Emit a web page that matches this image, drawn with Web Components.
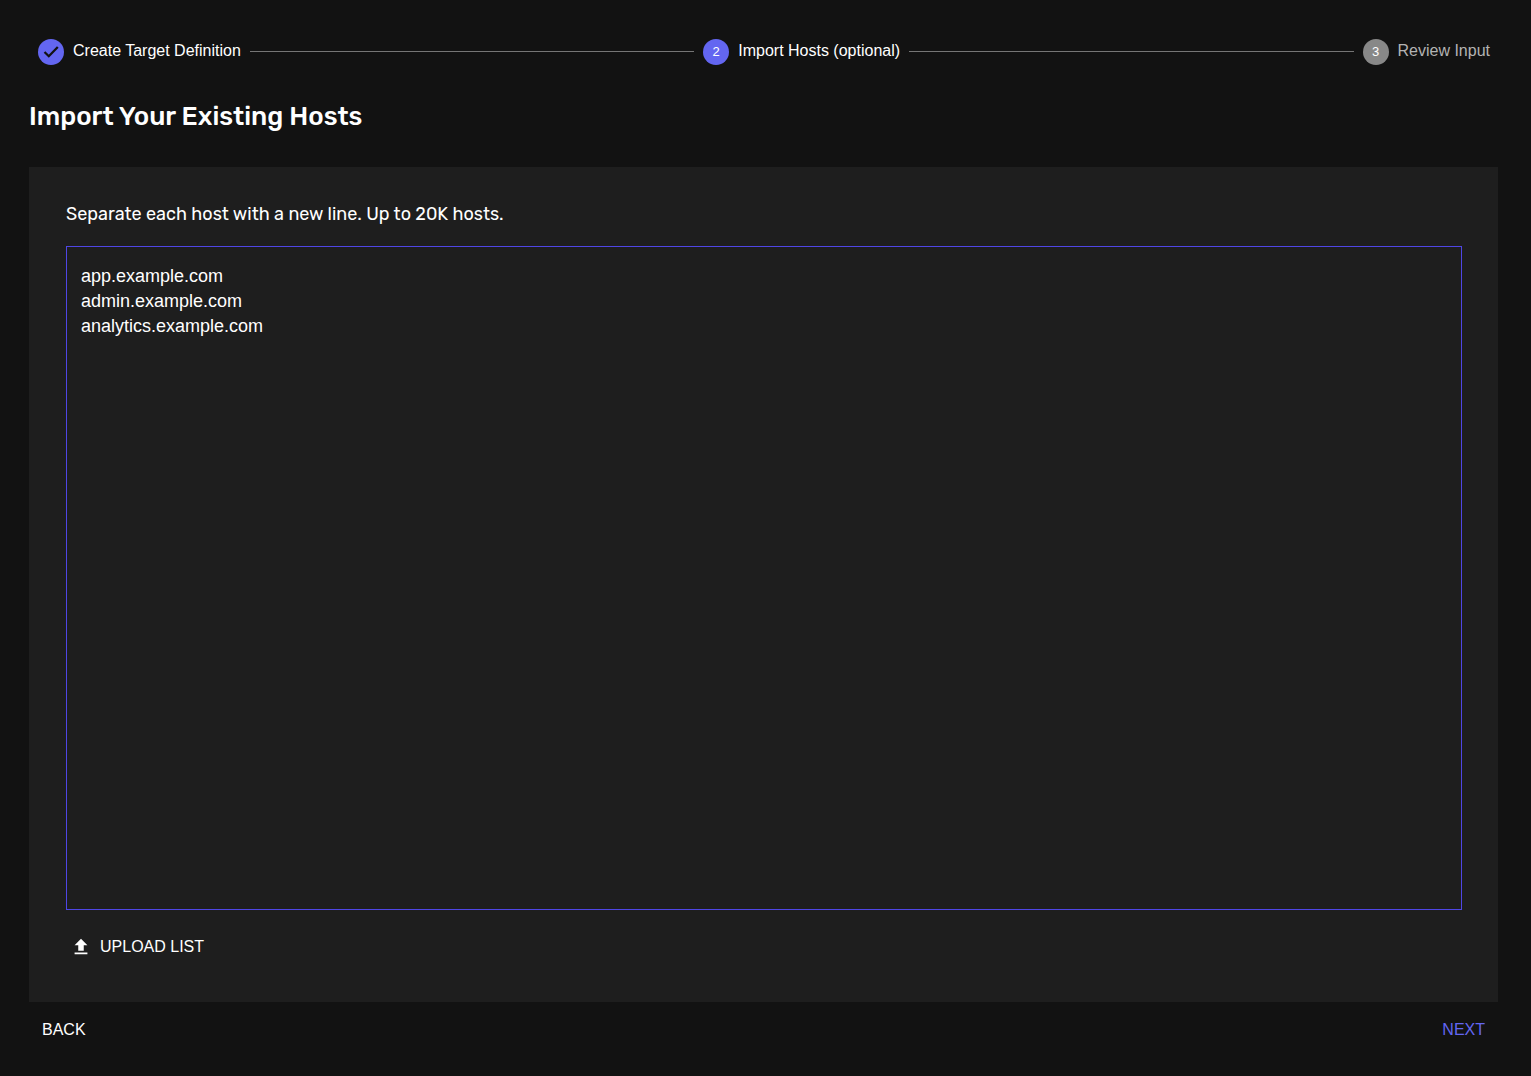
<!DOCTYPE html>
<html lang="en">
<head>
<meta charset="utf-8">
<title>Import Your Existing Hosts</title>
<style>
  html { background: #121212; }
  body {
    margin: 0;
    color: #fff;
    font-family: "Liberation Sans", Arial, sans-serif;
    --accent: #6366f1;
    --accent-strong: #4f46e5;
    --surface: #1e1e1e;
    --display: Rubik, Roboto, sans-serif;
  }
</style>
</head>
<body>
<host-import-page></host-import-page>

<template id="page-template">
  <style>
    :host {
      display: flex;
      flex-direction: column;
      box-sizing: border-box;
      min-height: 100vh;
      padding: 39px 33px 27px 29px;
    }
    h1 {
      margin: 32px 0 30px;
      font: 500 26px/40px var(--display);
    }
    host-panel { flex: 1; }
    footer {
      display: flex;
      justify-content: space-between;
      padding: 7px 6px 0;
    }
  </style>
  <step-list>
    <step-item number="1" state="done">Create Target Definition</step-item>
    <step-item number="2" state="active">Import Hosts (optional)</step-item>
    <step-item number="3" state="pending">Review Input</step-item>
  </step-list>
  <h1>Import Your Existing Hosts</h1>
  <host-panel></host-panel>
  <footer>
    <text-button>BACK</text-button>
    <text-button variant="primary">NEXT</text-button>
  </footer>
</template>

<template id="steps-template">
  <style>
    :host { display: flex; align-items: center; padding: 0 8px 0 9px; gap: 9px; }
  </style>
  <slot></slot>
</template>

<template id="step-template">
  <style>
    :host { display: contents; }
    .line {
      flex: 1;
      height: 1px;
      margin-bottom: 2px;
      background: #757575;
    }
    :host(:first-child) .line { display: none; }
    .badge {
      display: grid;
      place-items: center;
      width: 26px;
      height: 26px;
      border-radius: 50%;
      background: var(--accent);
      font-size: 13px;
      line-height: 26px;
    }
    :host([state="pending"]) .badge { background: #888; }
    .label { font-size: 16px; line-height: 24px; white-space: nowrap; padding-bottom: 2px; }
    :host([state="pending"]) .label { color: #b3b3b3; }
    svg { display: block; }
  </style>
  <span class="line"></span>
  <span class="badge"></span>
  <span class="label"><slot></slot></span>
</template>

<template id="panel-template">
  <style>
    :host {
      display: flex;
      flex-direction: column;
      align-items: flex-start;
      background: var(--surface);
      padding: 35px 36px 36px 37px;
    }
    label { font: 400 18px/24px var(--display); }
    textarea {
      flex: 1;
      align-self: stretch;
      box-sizing: border-box;
      min-height: 200px;
      margin: 20px 0 16px;
      padding: 17px 14px;
      border: 1px solid var(--accent-strong);
      border-radius: 0;
      outline: none;
      resize: none;
      background: transparent;
      color: #fff;
      font: 18px/25px "Liberation Sans", Arial, sans-serif;
    }
  </style>
  <label for="hosts">Separate each host with a new line. Up to 20K hosts.</label>
  <textarea id="hosts" spellcheck="false">app.example.com
admin.example.com
analytics.example.com</textarea>
  <text-button variant="icon">
    <svg slot="icon" width="22" height="22" viewBox="0 0 24 24" fill="#fff" aria-hidden="true"><path d="M9 16h6v-6h4l-7-7-7 7h4zm-4 2h14v2H5z"/></svg>UPLOAD LIST</text-button>
</template>

<template id="button-template">
  <style>
    :host { display: block; }
    button {
      display: flex;
      align-items: center;
      gap: 8px;
      margin: 0;
      padding: 9px 7px 7px;
      border: 0;
      background: none;
      color: #fff;
      font: 16px/24px "Liberation Sans", Arial, sans-serif;
      cursor: pointer;
    }
    :host([variant="icon"]) button { padding-inline: 4px; }
    :host([variant="primary"]) button { color: var(--accent); }
    ::slotted(svg) { display: block; }
  </style>
  <button type="button"><slot name="icon"></slot><span><slot></slot></span></button>
</template>

<script>
  class TemplateElement extends HTMLElement {
    constructor() {
      super();
      const template = document.getElementById(this.constructor.template);
      this.attachShadow({ mode: "open" }).append(template.content.cloneNode(true));
    }
  }

  class TextButton extends TemplateElement {
    static template = "button-template";
  }

  class StepItem extends TemplateElement {
    static template = "step-template";
    connectedCallback() {
      const badge = this.shadowRoot.querySelector(".badge");
      if (this.getAttribute("state") === "done") {
        badge.innerHTML = '<svg width="26" height="26" viewBox="0 0 26 26" aria-label="Completed"><path d="M6.5 13l4.3 4.2 9-9.2" fill="none" stroke="#121212" stroke-width="2.3"/></svg>';
      } else {
        badge.textContent = this.getAttribute("number");
      }
    }
  }

  class StepList extends TemplateElement {
    static template = "steps-template";
  }

  class HostPanel extends TemplateElement {
    static template = "panel-template";
  }

  class HostImportPage extends TemplateElement {
    static template = "page-template";
  }

  customElements.define("text-button", TextButton);
  customElements.define("step-item", StepItem);
  customElements.define("step-list", StepList);
  customElements.define("host-panel", HostPanel);
  customElements.define("host-import-page", HostImportPage);
</script>
</body>
</html>
